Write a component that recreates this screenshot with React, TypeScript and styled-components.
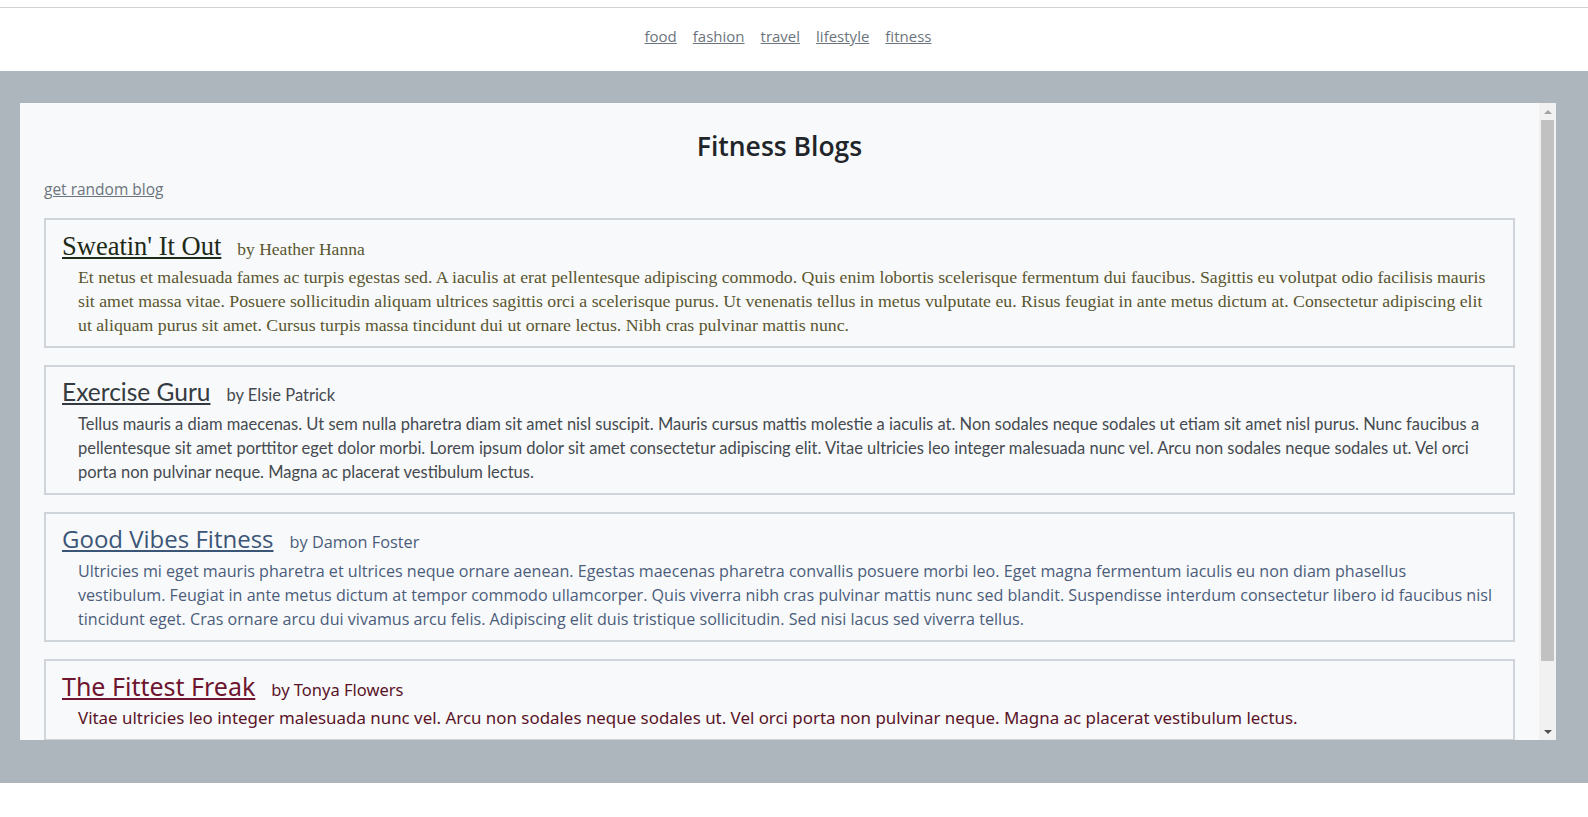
import React, { useLayoutEffect, useRef, useState } from 'react';
import styled, { createGlobalStyle } from 'styled-components';

const GlobalStyle = createGlobalStyle`
  html,
  body {
    margin: 0;
    padding: 0;
    background: #fff;
  }

  body {
    font-family: 'Open Sans', 'Noto Sans', sans-serif;
    color: #212529;
  }
`;

type BlogStyle = {
  font: string;
  titleSize: number;
  authorSize: number;
  bodySize: number;
  titleColor: string;
  bodyColor: string;
};

type Blog = {
  id: number;
  title: string;
  author: string;
  body: string;
  look: BlogStyle;
};

const BLOGS: Blog[] = [
  {
    id: 1,
    title: "Sweatin' It Out",
    author: 'Heather Hanna',
    body:
      'Et netus et malesuada fames ac turpis egestas sed. A iaculis at erat pellentesque adipiscing commodo. Quis enim lobortis scelerisque fermentum dui faucibus. Sagittis eu volutpat odio facilisis mauris sit amet massa vitae. Posuere sollicitudin aliquam ultrices sagittis orci a scelerisque purus. Ut venenatis tellus in metus vulputate eu. Risus feugiat in ante metus dictum at. Consectetur adipiscing elit ut aliquam purus sit amet. Cursus turpis massa tincidunt dui ut ornare lectus. Nibh cras pulvinar mattis nunc.',
    look: {
      font: "'Liberation Serif', 'DejaVu Serif', serif",
      titleSize: 26.5,
      authorSize: 17.5,
      bodySize: 17.75,
      titleColor: '#1e2a18',
      bodyColor: '#595630',
    },
  },
  {
    id: 2,
    title: 'Exercise Guru',
    author: 'Elsie Patrick',
    body:
      'Tellus mauris a diam maecenas. Ut sem nulla pharetra diam sit amet nisl suscipit. Mauris cursus mattis molestie a iaculis at. Non sodales neque sodales ut etiam sit amet nisl purus. Nunc faucibus a pellentesque sit amet porttitor eget dolor morbi. Lorem ipsum dolor sit amet consectetur adipiscing elit. Vitae ultricies leo integer malesuada nunc vel. Arcu non sodales neque sodales ut. Vel orci porta non pulvinar neque. Magna ac placerat vestibulum lectus.',
    look: {
      font: "Lato, 'Noto Sans', sans-serif",
      titleSize: 24.5,
      authorSize: 16.5,
      bodySize: 16.5,
      titleColor: '#343a40',
      bodyColor: '#454a50',
    },
  },
  {
    id: 3,
    title: 'Good Vibes Fitness',
    author: 'Damon Foster',
    body:
      'Ultricies mi eget mauris pharetra et ultrices neque ornare aenean. Egestas maecenas pharetra convallis posuere morbi leo. Eget magna fermentum iaculis eu non diam phasellus vestibulum. Feugiat in ante metus dictum at tempor commodo ullamcorper. Quis viverra nibh cras pulvinar mattis nunc sed blandit. Suspendisse interdum consectetur libero id faucibus nisl tincidunt eget. Cras ornare arcu dui vivamus arcu felis. Adipiscing elit duis tristique sollicitudin. Sed nisi lacus sed viverra tellus.',
    look: {
      font: "'Open Sans', 'Noto Sans', sans-serif",
      titleSize: 24,
      authorSize: 16.3,
      bodySize: 16.13,
      titleColor: '#3b5577',
      bodyColor: '#4b5d7a',
    },
  },
  {
    id: 4,
    title: 'The Fittest Freak',
    author: 'Tonya Flowers',
    body:
      'Vitae ultricies leo integer malesuada nunc vel. Arcu non sodales neque sodales ut. Vel orci porta non pulvinar neque. Magna ac placerat vestibulum lectus.',
    look: {
      font: "'Noto Sans', 'Open Sans', sans-serif",
      titleSize: 25,
      authorSize: 16.5,
      bodySize: 16.9,
      titleColor: '#6e1530',
      bodyColor: '#5a1428',
    },
  },
];

const CATEGORIES = ['food', 'fashion', 'travel', 'lifestyle', 'fitness'];

const Page = styled.div`
  min-height: 817px;
  background: #fff;
`;

const TopBar = styled.header`
  margin-top: 7px;
  border-top: 1px solid #d2d2d2;
  height: 64px;
  box-sizing: border-box;
  padding-top: 16px;
`;

const Nav = styled.nav`
  display: flex;
  justify-content: center;
  padding-left: 4px;
`;

const NavLink = styled.a`
  margin-right: 16px;
  font-size: 15px;
  line-height: 24px;
  color: #6c757d;
  text-decoration: underline;
  cursor: pointer;
`;

const Band = styled.main`
  display: flex;
  height: 712px;
  box-sizing: border-box;
  padding: 32px 32px 43px 20px;
  background: #adb5bd;
`;

const Panel = styled.section`
  flex: 1;
  display: flex;
  min-height: 0;
  background: #f8f9fa;
`;

const Scroller = styled.div`
  flex: 1;
  min-width: 0;
  overflow: hidden;
  padding: 0 24px 72px;
`;

const ScrollBar = styled.div`
  display: flex;
  flex-direction: column;
  width: 17px;
  background: #f1f1f1;
`;

const ScrollArrow = styled.div`
  display: flex;
  align-items: center;
  justify-content: center;
  height: 17px;
  flex: none;
`;

const ScrollTrack = styled.div`
  flex: 1;
  min-height: 0;
`;

const ScrollThumb = styled.div`
  margin: 0 2px;
  background: #c1c1c1;
`;

const Heading = styled.h1`
  margin: 28px 0 0;
  font-size: 26.5px;
  line-height: 30px;
  font-weight: 600;
  text-align: center;
  color: #212529;
`;

const RandomLink = styled.a`
  display: inline-block;
  margin-top: 17px;
  font-size: 15.5px;
  line-height: 22px;
  color: #6c757d;
  text-decoration: underline;
  cursor: pointer;
`;

const List = styled.div`
  display: flex;
  flex-direction: column;
  gap: 17px;
  margin-top: 18px;
`;

const Card = styled.article<{ $look: BlogStyle }>`
  border: 2px solid #ced4da;
  padding: 10px 16px 9px;
  font-family: ${p => p.$look.font};
`;

const CardHead = styled.div`
  display: flex;
  align-items: baseline;
  gap: 16px;
  height: 35px;
`;

const CardTitle = styled.a<{ $look: BlogStyle }>`
  font-size: ${p => `${p.$look.titleSize}px`};
  line-height: 1.25;
  color: ${p => p.$look.titleColor};
  text-decoration: underline;
  cursor: pointer;
`;

const Author = styled.span<{ $look: BlogStyle }>`
  font-size: ${p => `${p.$look.authorSize}px`};
  color: ${p => p.$look.bodyColor};
`;

const Body = styled.p<{ $look: BlogStyle }>`
  margin: 0;
  padding-left: 16px;
  font-size: ${p => `${p.$look.bodySize}px`};
  line-height: 24px;
  color: ${p => p.$look.bodyColor};
`;

const BlogCard = ({ blog }: { blog: Blog }) => (
  <Card $look={blog.look}>
    <CardHead>
      <CardTitle $look={blog.look}>{blog.title}</CardTitle>
      <Author $look={blog.look}>by {blog.author}</Author>
    </CardHead>
    <Body $look={blog.look}>{blog.body}</Body>
  </Card>
);

const Arrow = ({ up, color }: { up?: boolean; color: string }) => (
  <svg width="8" height="4" viewBox="0 0 8 4">
    <path d={up ? 'M0 4 L4 0 L8 4 Z' : 'M0 0 L8 0 L4 4 Z'} fill={color} />
  </svg>
);

const App = () => {
  const scrollerRef = useRef<HTMLDivElement>(null);
  const trackRef = useRef<HTMLDivElement>(null);
  const [thumb, setThumb] = useState(0);

  useLayoutEffect(() => {
    const el = scrollerRef.current;
    const track = trackRef.current;
    if (!el || !track) return;
    const ratio = Math.min(1, el.clientHeight / el.scrollHeight);
    setThumb(Math.round(track.clientHeight * ratio));
  }, []);

  return (
    <Page>
      <GlobalStyle />
      <TopBar>
        <Nav>
          {CATEGORIES.map(c => (
            <NavLink key={c}>{c}</NavLink>
          ))}
        </Nav>
      </TopBar>
      <Band>
        <Panel>
          <Scroller ref={scrollerRef}>
            <Heading>Fitness Blogs</Heading>
            <RandomLink>get random blog</RandomLink>
            <List>
              {BLOGS.map(b => (
                <BlogCard key={b.id} blog={b} />
              ))}
            </List>
          </Scroller>
          <ScrollBar>
            <ScrollArrow>
              <Arrow up color="#a3a3a3" />
            </ScrollArrow>
            <ScrollTrack ref={trackRef}>
              <ScrollThumb style={{ height: thumb }} />
            </ScrollTrack>
            <ScrollArrow>
              <Arrow color="#505050" />
            </ScrollArrow>
          </ScrollBar>
        </Panel>
      </Band>
    </Page>
  );
};

export default App;
